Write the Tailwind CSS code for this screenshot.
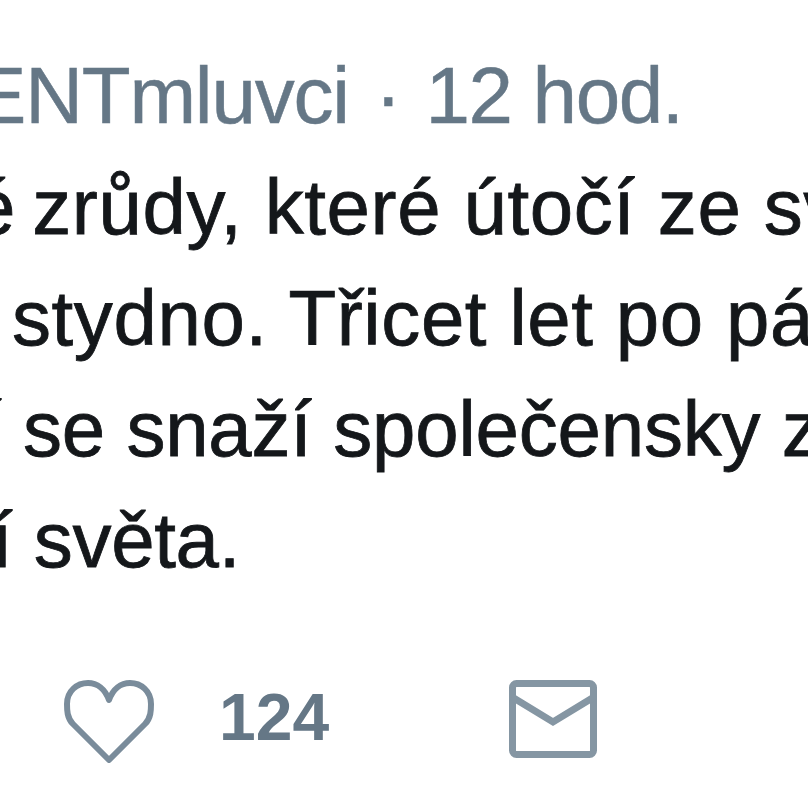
<!DOCTYPE html>
<html lang="cs">
<head>
    <meta charset="UTF-8">
    <title>Tweet</title>
    <script src="https://cdn.jsdelivr.net/npm/@tailwindcss/browser@4"></script>
</head>
<body class="bg-white">
    <div class="w-[808px] h-[808px] overflow-hidden font-['Liberation_Sans',sans-serif] whitespace-nowrap blur-[0.7px]">
        <div class="pt-[42px] flex text-[#657786] text-[80px] leading-[108px] h-[152px] [-webkit-text-stroke:0.5px_#657786]">
            <span class="ml-[-27px] tracking-[-1.2px]">ENTmluvci</span>
            <span class="ml-[26px]">·</span>
            <span class="ml-[24px] tracking-[-1.4px]">12 hod.</span>
        </div>
        <div class="text-[#14171a] text-[78px] leading-[111px] [-webkit-text-stroke:0.8px_#14171a]">
            <div class="ml-[-28px] tracking-[0.6px]"><span class="mr-[-6px]">é</span> zrůdy, které útočí ze svých</div>
            <div class="ml-[12px] tracking-[0.6px]">stydno. Třicet let po pádu</div>
            <div class="ml-[-20px] tracking-[-0.2px]">í se snaží společensky z</div>
            <div class="ml-[-9px] tracking-[-0.3px]">í světa.</div>
        </div>
        <div class="mt-[84px] flex items-start text-[#657786]">
            <svg class="ml-[64px] w-[90px] h-[84px]" viewBox="0 0 90 84" fill="none" stroke="#7a8c9b" stroke-width="6" stroke-linejoin="round">
                <path d="M45 80L9 44C3 38 3 30 3 24 3 11 13 3 24 3c9 0 17 6 21 17 4-11 12-17 21-17 11 0 21 8 21 21 0 6 0 14-6 20z"/>
            </svg>
            <span class="ml-[65px] mt-[-1px] text-[66px] leading-[76px] font-bold">124</span>
            <svg class="ml-[180px] w-[88px] h-[78px]" viewBox="0 0 88 78" fill="none" stroke="#8596a3" stroke-width="7">
                <rect x="3.5" y="3.5" width="81" height="71" rx="4"/>
                <path d="M3 17l41 25 41-25"/>
            </svg>
        </div>
    </div>
</body>
</html>
